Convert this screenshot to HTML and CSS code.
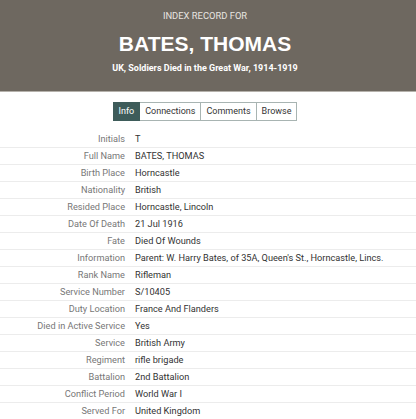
FILE: index.html
```html
<!doctype html>
<html>
    <head>
        <title>Index Record for Bates, Thomas</title>
        <meta charset="utf-8">
        <link rel="stylesheet" href="styles.css">
    </head>
    <body>
        <div class="header">
            <p class="kicker">INDEX RECORD FOR</p>
            <h1>BATES, THOMAS</h1>
            <p class="collection">UK, Soldiers Died in the Great War, 1914-1919</p>
        </div>
        <div class="tabs">
            <a class="tab active" href="#">Info</a><a class="tab" href="#">Connections</a><a class="tab" href="#">Comments</a><a class="tab" href="#">Browse</a>
        </div>
        <table class="record">
            <tr><th>Initials</th><td>T</td></tr>
            <tr><th>Full Name</th><td>BATES, THOMAS</td></tr>
            <tr><th>Birth Place</th><td>Horncastle</td></tr>
            <tr><th>Nationality</th><td>British</td></tr>
            <tr><th>Resided Place</th><td>Horncastle, Lincoln</td></tr>
            <tr><th>Date Of Death</th><td>21 Jul 1916</td></tr>
            <tr><th>Fate</th><td>Died Of Wounds</td></tr>
            <tr><th>Information</th><td>Parent: W. Harry Bates, of 35A, Queen's St., Horncastle, Lincs.</td></tr>
            <tr><th>Rank Name</th><td>Rifleman</td></tr>
            <tr><th>Service Number</th><td>S/10405</td></tr>
            <tr><th>Duty Location</th><td>France And Flanders</td></tr>
            <tr><th>Died in Active Service</th><td>Yes</td></tr>
            <tr><th>Service</th><td>British Army</td></tr>
            <tr><th>Regiment</th><td>rifle brigade</td></tr>
            <tr><th>Battalion</th><td>2nd Battalion</td></tr>
            <tr><th>Conflict Period</th><td>World War I</td></tr>
            <tr><th>Served For</th><td>United Kingdom</td></tr>
        </table>
    </body>
</html>
```

FILE: styles.css
```css
body {
    margin: 0;
    background: white;
    font: 9.2px/16px Roboto, 'Liberation Sans', sans-serif;
    color: #333;
}

.header {
    background: #6e6860;
    color: white;
    text-align: center;
    height: 92px;
    border-bottom: 1px solid #b5b1ab;
    padding: 10px 6px 0 0;
    box-sizing: border-box;
}

.kicker {
    margin: 0;
    font-size: 9.4px;
    line-height: 12px;
    color: #e8e5e0;
}

h1 {
    margin: 9px 0 0 0;
    font: bold 21px/26px 'Liberation Sans', Arial, sans-serif;
}

.collection {
    margin: 5px 0 0 0;
    font-size: 9px;
    line-height: 12px;
    font-weight: bold;
}

.tabs {
    display: flex;
    justify-content: center;
    margin: 10px 0 10px 0;
    padding-right: 6px;
}

.tab {
    display: block;
    padding: 0 5px;
    height: 17px;
    line-height: 17px;
    border: 1px solid #a8b4b2;
    border-left: none;
    color: #333;
    text-decoration: none;
    font-size: 9px;
}

.tab:first-child {
    border-left: 1px solid #a8b4b2;
}

.tab.active {
    background: #3e5c5a;
    border-color: #3e5c5a;
    color: white;
}

.record {
    width: 100%;
    border-collapse: collapse;
}

.record tr {
    border-bottom: 1px solid #ececec;
}

.record tr:last-child {
    border-bottom: none;
}

.record th {
    width: 125px;
    padding: 0 10px 0 0;
    text-align: right;
    font-weight: normal;
    color: #777;
    white-space: nowrap;
    height: 16px;
}

.record td {
    padding: 0;
    color: #333;
    height: 16px;
}
```
